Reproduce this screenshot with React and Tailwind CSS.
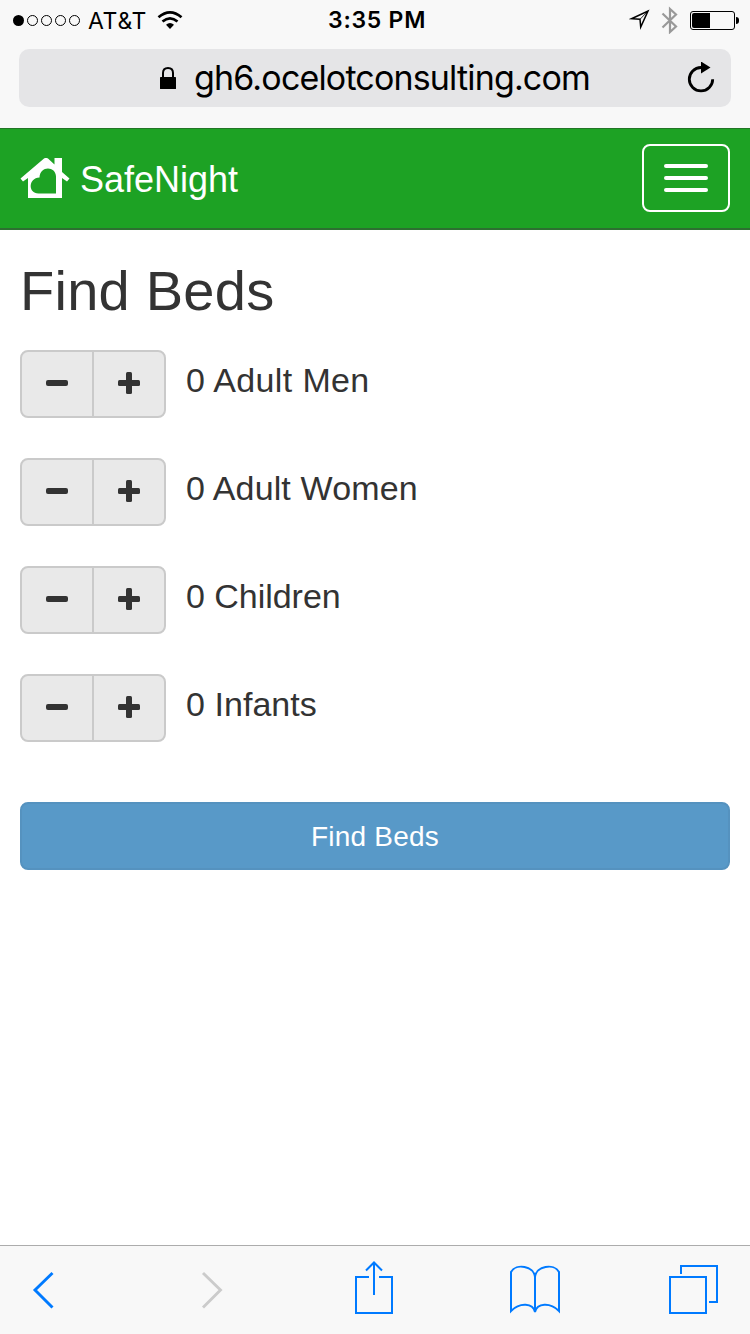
import React from "react";

function StatusBar() {
  return (
    <div className="flex h-10 items-center pl-[13px] pr-[11px] text-black">
      <div className="flex w-[315px] items-center">
        <div className="flex gap-[3px]">
          <span className="h-[11px] w-[11px] rounded-full bg-black" />
          {[0, 1, 2, 3].map((i) => (
            <span key={i} className="h-[11px] w-[11px] rounded-full border border-black" />
          ))}
        </div>
        <span className="ml-[8px] mt-px w-[59px] whitespace-nowrap text-[23px] leading-10 tracking-[0.7px]">AT&amp;T</span>
        <svg className="ml-[10px] mt-[-1px]" width="26" height="20" viewBox="0 0 26 20" fill="none" stroke="#000" strokeWidth="2.7">
          <path d="M1.5 7.2 Q13 -2.6 24.5 7.2" />
          <path d="M5.5 11.5 Q13 5.2 20.5 11.5" />
          <path d="M9 14.8 Q13 11.3 17 14.8 L13 19Z" fill="#000" stroke="none" />
        </svg>
      </div>
      <span className="w-[110px] whitespace-nowrap text-[23px] font-semibold leading-10 tracking-[0.75px]">3:35 PM</span>
      <svg className="ml-auto" width="24" height="22" viewBox="0 0 24 22" fill="none" stroke="#000" strokeWidth="1.5">
        <path d="M2.5 9.7 L19 2 L11.7 18 L11 10.3Z" />
        <path d="M11 10.3 L18 3" strokeWidth="0.8" />
      </svg>
      <svg className="ml-[8px]" width="18" height="28" viewBox="0 0 18 28" fill="none" stroke="#999" strokeWidth="2.2">
        <path d="M1.5 7.5 L15 20.5 L9 26 V3 L15 8.5 L1.5 21.5" />
      </svg>
      <div className="ml-[11px] flex items-center">
        <div className="h-[19px] w-[45px] rounded-[3px] border border-black p-px">
          <div className="h-[15px] w-[18px] rounded-l-[2px] bg-black" />
        </div>
        <div className="ml-px h-[7px] w-[3px] rounded-r-full bg-black" />
      </div>
    </div>
  );
}

function AddressBar() {
  return (
    <div className="mx-[19px] mt-[9px] flex h-[58px] items-center rounded-[10px] bg-[#e5e5e7] pl-[141px] pr-[16px]">
      <svg width="16" height="22" viewBox="0 0 16 22">
        <path d="M3 11 V6 Q3 1 8 1 Q13 1 13 6 V11" fill="none" stroke="#000" strokeWidth="2" />
        <rect y="10" width="16" height="12" rx="0.6" />
      </svg>
      <span className="ml-[18px] whitespace-nowrap text-[34px] leading-[58px] tracking-[-0.84px] text-black">gh6.ocelotconsulting.com</span>
      <svg className="ml-auto" width="28" height="32" viewBox="0 0 28 32">
        <path d="M14 5.5 A11.7 11.7 0 1 0 25.7 17.2" fill="none" stroke="#000" strokeWidth="2.8" />
        <path d="M14 -0.5 L23.5 5.5 L14 11.5Z" />
      </svg>
    </div>
  );
}

function Navbar() {
  return (
    <nav className="flex h-[102px] items-start border-b-2 border-t border-b-[#2d6f31] border-t-[#227526] bg-[#1da224] px-5 pt-[15px] font-['Liberation_Sans',sans-serif]">
      <svg className="mt-[14px] blur-[0.4px]" width="50" height="42" viewBox="0 0 50 42">
        <path d="M0.5 20.5 L24 0.5 Q26 -0.8 28 0.5 L34.5 6.5 V0 H42 V14 L49.5 20.5 L47 23.5 L42 20 V40 H8 V20 L3 23.5Z" fill="#fff" />
        <path d="M36 35.5 H18.5 C8 35.5 8 20 19.5 19.5 C20 7 36 8 36 18.5Z" fill="#1da224" />
      </svg>
      <span className="ml-[10px] mt-[11px] whitespace-nowrap text-[36px] leading-[50px] text-white">SafeNight</span>
      <button className="ml-auto flex h-[68px] w-[88px] flex-col items-center justify-center gap-2 rounded-lg border-2 border-white" aria-label="Menu">
        <span className="h-1 w-11 rounded-[2px] bg-white" />
        <span className="h-1 w-11 rounded-[2px] bg-white" />
        <span className="h-1 w-11 rounded-[2px] bg-white" />
      </button>
    </nav>
  );
}

const people = [
  { label: "0 Adult Men", spacing: "tracking-[0.37px]" },
  { label: "0 Adult Women", spacing: "tracking-[0.14px]" },
  { label: "0 Children", spacing: "tracking-[-0.03px]" },
  { label: "0 Infants", spacing: "tracking-[0.05px]" },
];

function Counter({ label, spacing }) {
  return (
    <div className="flex h-[68px]">
      <div className="flex w-[146px] rounded-lg border-2 border-[#cacaca] bg-[#e9e9e9]">
        <button className="flex w-[72px] items-center justify-center border-r-2 border-[#cacaca] pb-[2px]" aria-label="Remove">
          <span className="h-[6px] w-[22px] rounded-[2px] bg-[#333]" />
        </button>
        <button className="flex w-[70px] items-center justify-center pb-[2px]" aria-label="Add">
          <svg width="22" height="22" viewBox="0 0 22 22" fill="#333">
            <rect y="8" width="22" height="6" rx="1.5" />
            <rect x="8" width="6" height="22" rx="1.5" />
          </svg>
        </button>
      </div>
      <span className={`ml-5 h-[60px] whitespace-nowrap text-[34px] leading-[60px] ${spacing}`}>{label}</span>
    </div>
  );
}

function Toolbar() {
  return (
    <footer className="flex h-[89px] border-t border-[#acacac] bg-[#f8f8f8]">
      <svg width="750" height="88" viewBox="0 0 750 88" fill="none" stroke="#007aff" strokeWidth="2">
        <path d="M52.5 27 L35 44 L52.5 61.5" strokeWidth="2.9" />
        <path d="M203 27 L220.5 44 L203 61.5" stroke="#cbcbcb" strokeWidth="2.9" />
        <path d="M369 31 H356 V67 H392 V31 H379 M374 49 V17 M366 24.5 L374 16.5 L382 24.5" />
        <path d="M535 66 V31 C534 20 516 17 511 26 V65 C520 56 533 57 535 66 C537 57 550 56 559 65 V26 C554 17 536 20 535 31" />
        <path d="M670 31 H706 V67 H670Z M681 28 V20 H717 V56 H709" />
      </svg>
    </footer>
  );
}

export default function App() {
  return (
    <div className="flex h-[1334px] w-[750px] flex-col overflow-hidden bg-white font-['Inter',sans-serif] text-[#333]">
      <header className="h-32 shrink-0 bg-[#f8f8f8]">
        <StatusBar />
        <AddressBar />
      </header>
      <Navbar />
      <main className="flex flex-1 flex-col px-5 font-['Liberation_Sans',sans-serif]">
        <h1 className="mt-[30px] h-[62px] whitespace-nowrap text-[56px] leading-[62px] tracking-[0.25px]">Find Beds</h1>
        <div className="mt-[28px] flex flex-col gap-10">
          {people.map((p) => (
            <Counter key={p.label} {...p} />
          ))}
        </div>
        <button className="mt-[60px] h-[68px] rounded-lg border-2 border-[#5592bf] bg-[#5899c8] pt-px text-[28px] leading-[63px] tracking-[0.2px] text-white">Find Beds</button>
      </main>
      <Toolbar />
    </div>
  );
}
